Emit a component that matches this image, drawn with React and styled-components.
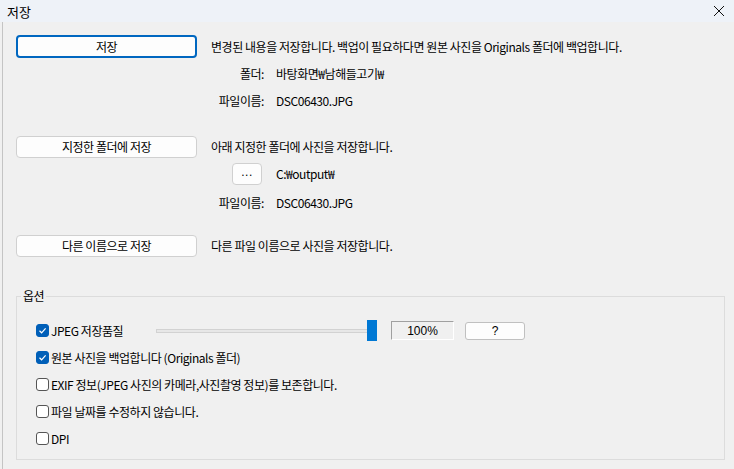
import React from "react";
import styled, { createGlobalStyle } from "styled-components";

const Global = createGlobalStyle`
  html, body { margin: 0; padding: 0; background: #f0f0f0; }
  body { font-family: "Noto Sans CJK KR", "Noto Sans", sans-serif; font-size: 12px; color: #000; letter-spacing: -0.45px; }
  * { box-sizing: border-box; }
`;

const Window = styled.div`
  width: 734px;
  height: 469px;
  display: flex;
  flex-direction: column;
  background: #f0f0f0;
  overflow: hidden;
`;

const TitleBar = styled.div`
  height: 22px;
  flex: none;
  display: flex;
  align-items: center;
  justify-content: space-between;
  padding: 0 9px 0 7px;
  background: #eef2f8;
  font-size: 13px;
  letter-spacing: 0;
`;

const Close = styled.div`
  width: 12px;
  height: 12px;
  display: flex;
`;

const Body = styled.div`
  flex: 1;
  border-left: 1px solid #c4c4c4;
  margin-left: 2px;
  padding: 11px 9px 0 13px;
  display: flex;
  flex-direction: column;
`;

const Section = styled.div`
  display: grid;
  grid-template-columns: 181px 1fr;
  column-gap: 14px;
  margin-top: ${(p) => p.$mt || 0}px;
`;

const Row = styled.div`
  grid-column: 2;
  height: ${(p) => p.$h || 27}px;
  display: flex;
  align-items: center;
  white-space: nowrap;
`;

const LeftCell = styled.div`
  grid-column: 1;
  grid-row: 1;
  display: flex;
  align-items: center;
`;

const Btn = styled.div`
  width: 181px;
  height: ${(p) => (p.$def ? 23 : 22)}px;
  display: flex;
  align-items: center;
  justify-content: center;
  background: #fdfdfd;
  border: ${(p) => (p.$def ? "2px solid #0067c0" : "1px solid #d0d0d0")};
  border-radius: 4px;
  font-size: 12px;
`;

const InfoLabel = styled.span`
  width: 53px;
  text-align: right;
  margin-right: 12px;
`;

const DotsBtn = styled.div`
  width: 30px;
  height: 22px;
  margin-left: 21px;
  margin-right: 14px;
  display: flex;
  align-items: center;
  justify-content: center;
  background: #fdfdfd;
  border: 1px solid #d0d0d0;
  border-radius: 4px;
  font-family: "Liberation Sans", sans-serif;
  font-size: 12px;
  letter-spacing: 0.5px;
  padding-bottom: 3px;
`;

const Group = styled.fieldset`
  margin: 31px 0 0 0;
  width: 709px;
  height: 170px;
  border: 1px solid #dcdcdc;
  padding: 15px 0 0 19px;
  display: flex;
  flex-direction: column;
`;

const Legend = styled.legend`
  padding: 0 2px;
  margin-left: -15px;
  font-size: 12px;
  line-height: 12px;
`;

const OptRow = styled.div`
  height: 27px;
  display: flex;
  align-items: center;
  white-space: nowrap;
`;

const Check = styled.span`
  width: 13px;
  height: 13px;
  flex: none;
  border-radius: 3px;
  margin-right: 2px;
  display: flex;
  align-items: center;
  justify-content: center;
  background: ${(p) => (p.$on ? "#005fb8" : "#fff")};
  border: 1px solid ${(p) => (p.$on ? "#005fb8" : "#555")};
`;

const OptLabel = styled.span`
  width: ${(p) => p.$w || "auto"};
`;

const Slider = styled.div`
  width: 221px;
  height: 21px;
  display: flex;
  align-items: center;
`;

const Track = styled.div`
  flex: 1;
  height: 4px;
  background: #e7e7e7;
  border: 1px solid #d2d2d2;
`;

const Thumb = styled.div`
  width: 10px;
  height: 21px;
  background: #0078d4;
  margin-left: -8px;
`;

const Edit = styled.div`
  width: 63px;
  height: 19px;
  margin-left: 14px;
  display: flex;
  align-items: center;
  justify-content: center;
  background: #f0f0f0;
  border-top: 1px solid #a0a0a0;
  border-left: 1px solid #a0a0a0;
  border-bottom: 1px solid #fff;
  border-right: 1px solid #fff;
  font-family: "Liberation Sans", sans-serif;
  font-size: 12px;
  letter-spacing: 0;
`;

const Help = styled.div`
  width: 60px;
  height: 18px;
  margin-left: 11px;
  display: flex;
  align-items: center;
  justify-content: center;
  background: #fdfdfd;
  border: 1px solid #c0c0c0;
  border-radius: 3px;
  font-family: "Liberation Sans", sans-serif;
  font-size: 12px;
  letter-spacing: 0;
`;

const Tick = () => (
  <svg width="9" height="9" viewBox="0 0 9 9">
    <path d="M1.5 4.8 L3.6 6.8 L7.6 2.3" fill="none" stroke="#fff" strokeWidth="1.2" />
  </svg>
);

const Option = ({ on, children }) => (
  <OptRow>
    <Check $on={on}>{on && <Tick />}</Check>
    <OptLabel>{children}</OptLabel>
  </OptRow>
);

export default function App() {
  return (
    <Window>
      <Global />
      <TitleBar>
        <span>저장</span>
        <Close>
          <svg width="12" height="12" viewBox="0 0 12 12">
            <path d="M1 1 L11 11 M11 1 L1 11" stroke="#111" strokeWidth="1" />
          </svg>
        </Close>
      </TitleBar>
      <Body>
        <Section>
          <LeftCell><Btn $def>저장</Btn></LeftCell>
          <Row>변경된 내용을 저장합니다. 백업이 필요하다면 원본 사진을 Originals 폴더에 백업합니다.</Row>
          <Row><InfoLabel>폴더:</InfoLabel>바탕화면₩남해들고기₩</Row>
          <Row><InfoLabel>파일이름:</InfoLabel>DSC06430.JPG</Row>
        </Section>
        <Section $mt={19}>
          <LeftCell><Btn>지정한 폴더에 저장</Btn></LeftCell>
          <Row>아래 지정한 폴더에 사진을 저장합니다.</Row>
          <Row><DotsBtn>...</DotsBtn>C:₩output₩</Row>
          <Row $h={30}><InfoLabel>파일이름:</InfoLabel>DSC06430.JPG</Row>
        </Section>
        <Section $mt={15}>
          <LeftCell><Btn>다른 이름으로 저장</Btn></LeftCell>
          <Row>다른 파일 이름으로 사진을 저장합니다.</Row>
        </Section>
        <Group>
          <Legend>옵션</Legend>
          <OptRow>
            <Check $on><Tick /></Check>
            <OptLabel $w="105px">JPEG 저장품질</OptLabel>
            <Slider><Track /><Thumb /></Slider>
            <Edit>100%</Edit>
            <Help>?</Help>
          </OptRow>
          <Option on>원본 사진을 백업합니다 (Originals 폴더)</Option>
          <Option>EXIF 정보(JPEG 사진의 카메라,사진촬영 정보)를 보존합니다.</Option>
          <Option>파일 날짜를 수정하지 않습니다.</Option>
          <Option>DPI</Option>
        </Group>
      </Body>
    </Window>
  );
}
